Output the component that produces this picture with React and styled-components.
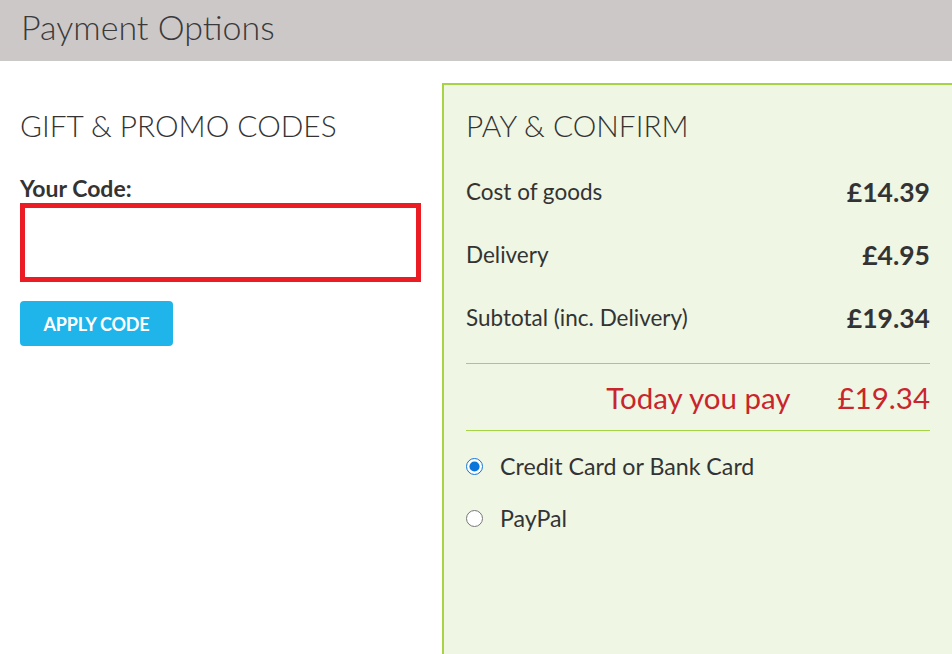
import React, { useState } from "react";
import styled, { createGlobalStyle } from "styled-components";

const GlobalStyle = createGlobalStyle`
  html, body {
    margin: 0;
    padding: 0;
    background: #fff;
    font-family: Lato, "Open Sans", sans-serif;
    color: #333;
  }
`;

const Page = styled.div`
  width: 952px;
  height: 654px;
  overflow: hidden;
`;

const TopBar = styled.div`
  height: 61px;
  background: #cdc8c8;
  display: flex;
  align-items: center;
  padding-left: 21px;
`;

const PageTitle = styled.h1`
  margin: 0 0 9px;
  font-size: 34px;
  font-weight: 300;
  color: #3a3a3a;
`;

const Columns = styled.div`
  display: flex;
  padding-top: 22px;
`;

const LeftCol = styled.div`
  width: 401px;
  padding: 26px 0 0 20px;
  margin-right: 21px;
`;

const SectionTitle = styled.h2`
  margin: 0;
  font-size: 29.8px;
  font-weight: 300;
  color: #333;
  line-height: 34px;
`;

const Label = styled.label`
  display: block;
  margin-top: 32px;
  font-size: 23px;
  font-weight: 700;
  color: #333;
  line-height: 26px;
`;

const CodeInput = styled.input`
  display: block;
  box-sizing: border-box;
  width: 401px;
  height: 79px;
  margin-top: 2px;
  border: 5px solid #ec1c24;
  outline: none;
  font-family: inherit;
  font-size: 20px;
  padding: 0 12px;
`;

const ApplyButton = styled.button`
  margin-top: 19px;
  width: 153px;
  height: 45px;
  border: none;
  border-radius: 4px;
  background: #1fb5ea;
  color: #fff;
  font-family: inherit;
  font-size: 18px;
  font-weight: 700;
  letter-spacing: -0.2px;
  cursor: pointer;
`;

const Panel = styled.div`
  flex: 1;
  height: 640px;
  background: #eff6e4;
  border: 2px solid #a6d444;
  border-right: none;
  padding: 24px 22px 0 22px;
`;

const Rows = styled.div`
  margin-top: 17px;
  margin-bottom: 14px;
`;

const Row = styled.div`
  display: flex;
  justify-content: space-between;
  align-items: center;
  height: 63px;
  color: #333;
`;

const RowLabel = styled.span`
  font-size: 22.5px;
`;

const RowValue = styled.span`
  font-size: 26.5px;
  font-weight: 700;
`;

const Divider = styled.hr`
  margin: 0;
  border: none;
  border-top: 1px solid #a6d444;
`;

const TotalRow = styled.div`
  display: flex;
  justify-content: flex-end;
  align-items: center;
  gap: 47px;
  height: 66px;
  color: #c9252c;
  font-size: 29.5px;
`;

const Options = styled.div`
  padding-top: 9px;
`;

const Option = styled.label`
  display: flex;
  align-items: center;
  height: 52px;
  font-size: 23.2px;
  color: #333;
  cursor: pointer;
`;

const Radio = styled.input`
  width: 17px;
  height: 17px;
  margin: 0 17px 0 0;
  accent-color: #0a74da;
`;

export default function App() {
  const [method, setMethod] = useState("card");

  return (
    <Page>
      <GlobalStyle />
      <TopBar>
        <PageTitle>Payment Options</PageTitle>
      </TopBar>
      <Columns>
        <LeftCol>
          <SectionTitle>GIFT &amp; PROMO CODES</SectionTitle>
          <Label htmlFor="code">Your Code:</Label>
          <CodeInput id="code" type="text" />
          <ApplyButton type="button">APPLY CODE</ApplyButton>
        </LeftCol>
        <Panel>
          <SectionTitle>PAY &amp; CONFIRM</SectionTitle>
          <Rows>
            <Row>
              <RowLabel>Cost of goods</RowLabel>
              <RowValue>£14.39</RowValue>
            </Row>
            <Row>
              <RowLabel>Delivery</RowLabel>
              <RowValue>£4.95</RowValue>
            </Row>
            <Row>
              <RowLabel>Subtotal (inc. Delivery)</RowLabel>
              <RowValue>£19.34</RowValue>
            </Row>
          </Rows>
          <Divider />
          <TotalRow>
            <span>Today you pay</span>
            <span>£19.34</span>
          </TotalRow>
          <Divider />
          <Options>
            <Option>
              <Radio type="radio" name="method" checked={method === "card"} onChange={() => setMethod("card")} />
              Credit Card or Bank Card
            </Option>
            <Option>
              <Radio type="radio" name="method" checked={method === "paypal"} onChange={() => setMethod("paypal")} />
              PayPal
            </Option>
          </Options>
        </Panel>
      </Columns>
    </Page>
  );
}
